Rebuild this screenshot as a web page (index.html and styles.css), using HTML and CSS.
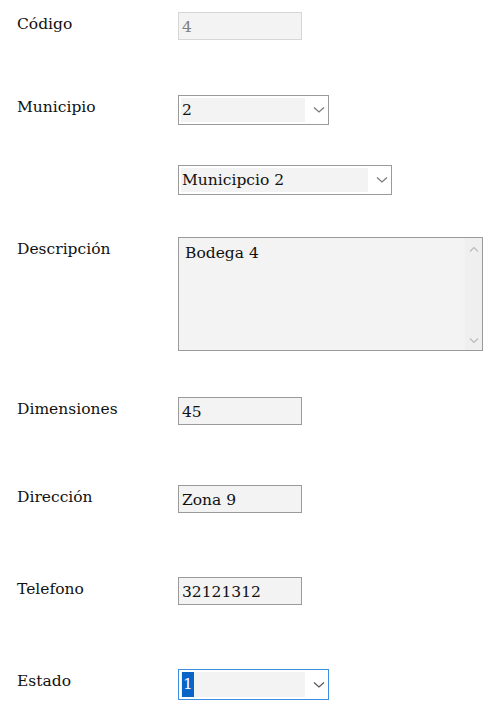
FILE: index.html
```html
<!DOCTYPE html>
<html lang="es">
<head>
<meta charset="utf-8">
<title>Bodega</title>
<link rel="stylesheet" href="styles.css">
</head>
<body>
<form class="form">
  <div class="row row-codigo">
    <label class="label">Código</label>
    <input class="input input-disabled" type="text" value="4" disabled>
  </div>
  <div class="row row-municipio">
    <label class="label">Municipio</label>
    <div class="select select-sm">
      <span class="select-value">2</span>
      <svg class="chev" width="12" height="8" viewBox="0 0 12 8"><path d="M1 1.5 L6 6 L11 1.5" fill="none" stroke="#777" stroke-width="1.2"/></svg>
    </div>
  </div>
  <div class="row row-municipio2">
    <span class="label"></span>
    <div class="select select-lg">
      <span class="select-value">Municipcio 2</span>
      <svg class="chev" width="12" height="8" viewBox="0 0 12 8"><path d="M1 1.5 L6 6 L11 1.5" fill="none" stroke="#777" stroke-width="1.2"/></svg>
    </div>
  </div>
  <div class="row row-desc">
    <label class="label">Descripción</label>
    <div class="textarea">
      <div class="textarea-text">Bodega 4</div>
      <div class="scrollbar">
        <svg width="10" height="7" viewBox="0 0 10 7"><path d="M1 5.5 L5 1.5 L9 5.5" fill="none" stroke="#bbb" stroke-width="1.2"/></svg>
        <svg width="10" height="7" viewBox="0 0 10 7"><path d="M1 1.5 L5 5.5 L9 1.5" fill="none" stroke="#bbb" stroke-width="1.2"/></svg>
      </div>
    </div>
  </div>
  <div class="row row-dim">
    <label class="label">Dimensiones</label>
    <input class="input" type="text" value="45">
  </div>
  <div class="row row-dir">
    <label class="label">Dirección</label>
    <input class="input" type="text" value="Zona 9">
  </div>
  <div class="row row-tel">
    <label class="label">Telefono</label>
    <input class="input" type="text" value="32121312">
  </div>
  <div class="row row-estado">
    <label class="label">Estado</label>
    <div class="select select-sm select-focus">
      <span class="select-value"><span class="selected">1</span></span>
      <svg class="chev" width="12" height="8" viewBox="0 0 12 8"><path d="M1 1.5 L6 6 L11 1.5" fill="none" stroke="#555" stroke-width="1.2"/></svg>
    </div>
  </div>
</form>
</body>
</html>
```

FILE: styles.css
```css
* { box-sizing: border-box; }
html, body { margin: 0; padding: 0; background: #fff; }
body {
  font-family: "DejaVu Serif", serif;
  color: #111;
}
.form {
  display: flex;
  flex-direction: column;
  padding: 12px 0 0 17px;
}
.row {
  display: flex;
  align-items: flex-start;
}
.label {
  width: 161px;
  flex: none;
  font-size: 15.5px;
  line-height: 20px;
  margin-top: 2px;
  color: #111;
}
.row-municipio { margin-top: 55px; }
.row-municipio2 { margin-top: 40px; }
.row-desc { margin-top: 42px; }
.row-dim { margin-top: 46px; }
.row-dir { margin-top: 60px; }
.row-tel { margin-top: 64px; }
.row-estado { margin-top: 64px; }

.input {
  width: 124px;
  height: 28px;
  border: 1px solid #9a9a9a;
  background: #f3f3f3;
  font-family: "DejaVu Serif", serif;
  font-size: 15.5px;
  color: #111;
  padding: 2px 3px 0;
  margin: 0;
  outline: none;
}
.input-disabled {
  border-color: #d6d6d6;
  color: #808080;
  background: #f3f3f3;
}

.select {
  display: flex;
  align-items: center;
  height: 30px;
  border: 1px solid #9a9a9a;
  background: #fff;
  padding: 2px;
}
.select-sm { width: 151px; }
.select-lg { width: 214px; }
.select-focus { border-color: #3d8ee0; height: 31px; }
.select-value {
  flex: 1;
  height: 100%;
  background: #f3f3f3;
  font-size: 15.5px;
  line-height: 24px;
  padding-left: 1px;
  margin-right: 8px;
  color: #111;
}
.selected {
  display: inline-block;
  height: 100%;
  background: #0a64c8;
  color: #fff;
  padding: 0 1px;
}
.chev { flex: none; margin-right: 1px; }

.textarea {
  width: 305px;
  height: 114px;
  border: 1px solid #9a9a9a;
  background: #f3f3f3;
  display: flex;
}
.textarea-text {
  flex: 1;
  font-size: 15.5px;
  line-height: 20px;
  padding: 5px 6px;
  color: #111;
}
.scrollbar {
  width: 17px;
  background: #efefef;
  display: flex;
  flex-direction: column;
  justify-content: space-between;
  align-items: center;
  padding: 8px 0 6px;
}
```
